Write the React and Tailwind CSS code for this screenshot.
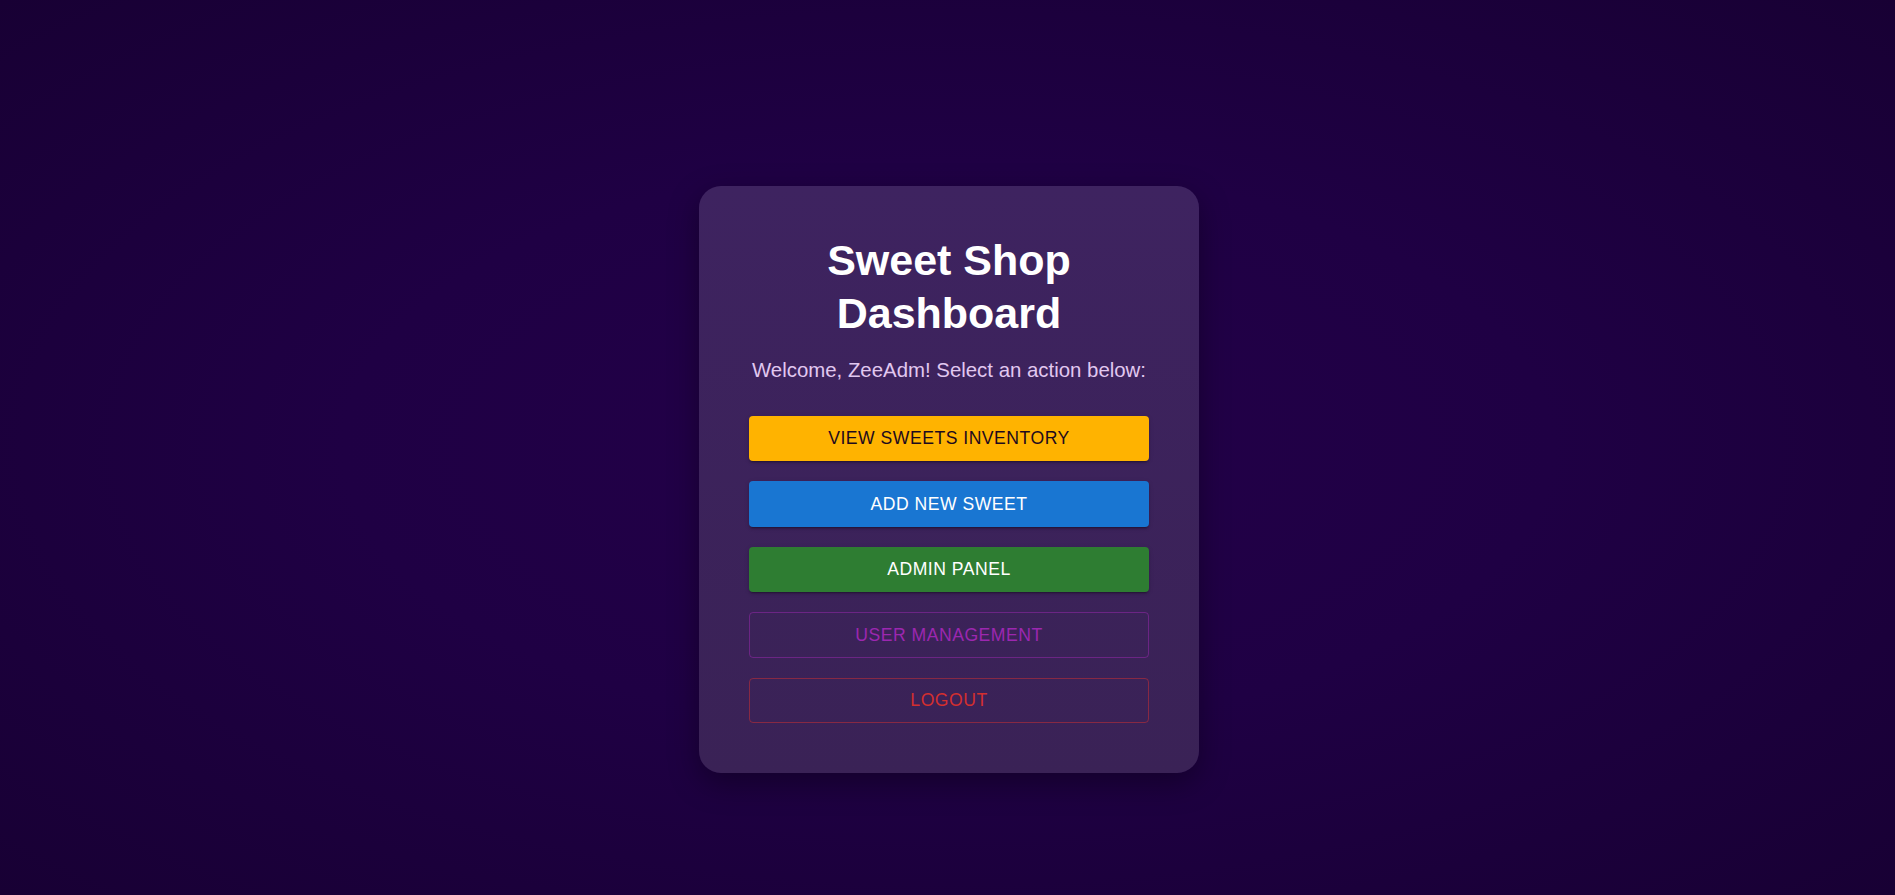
import React from 'react';

const actions = [
    { label: 'View Sweets Inventory', cls: 'bg-[#ffb300] text-[#1e0a1e] shadow-[0_3px_1px_-2px_rgba(0,0,0,0.2),0_2px_2px_0_rgba(0,0,0,0.14),0_1px_5px_0_rgba(0,0,0,0.12)]' },
    { label: 'Add New Sweet', cls: 'bg-[#1976d2] text-white shadow-[0_3px_1px_-2px_rgba(0,0,0,0.2),0_2px_2px_0_rgba(0,0,0,0.14),0_1px_5px_0_rgba(0,0,0,0.12)]' },
    { label: 'Admin Panel', cls: 'bg-[#2e7d32] text-white shadow-[0_3px_1px_-2px_rgba(0,0,0,0.2),0_2px_2px_0_rgba(0,0,0,0.14),0_1px_5px_0_rgba(0,0,0,0.12)]' },
    { label: 'User Management', cls: 'border border-[#9c27b0]/50 text-[#9c27b0]' },
    { label: 'Logout', cls: 'border border-[#d32f2f]/50 text-[#d32f2f]' },
];

const App = () => {
    return (
        <div
            className="min-h-screen w-full flex items-center justify-center pt-16 pl-[3px] bg-[radial-gradient(ellipse_at_center,#230049_0%,#1f0044_45%,#180034_100%)]"
            style={{ fontFamily: '"Liberation Sans", Arial, sans-serif' }}
        >
            {/* Dashboard card */}
            <div className="w-[500px] rounded-[22px] bg-gradient-to-b from-[#3e2360] to-[#3a2256] px-[50px] pt-[48px] pb-[50px] shadow-[0_10px_30px_rgba(0,0,0,0.35)] text-center">
                <h1 className="text-[43px] leading-[53px] font-bold text-white">
                    Sweet Shop
                    <br />
                    Dashboard
                </h1>
                <p className="mt-[15px] text-[20.4px] leading-[30px] text-[#e1c8f0]">
                    Welcome, ZeeAdm! Select an action below:
                </p>

                <div className="mt-[31px] flex flex-col gap-5">
                    {actions.map((a) => (
                        <button
                            key={a.label}
                            className={`h-[45.5px] w-full rounded-[4px] uppercase text-[17.6px] tracking-[0.5px] flex items-center justify-center ${a.cls}`}
                        >
                            {a.label}
                        </button>
                    ))}
                </div>
            </div>
        </div>
    );
};

export default App;
